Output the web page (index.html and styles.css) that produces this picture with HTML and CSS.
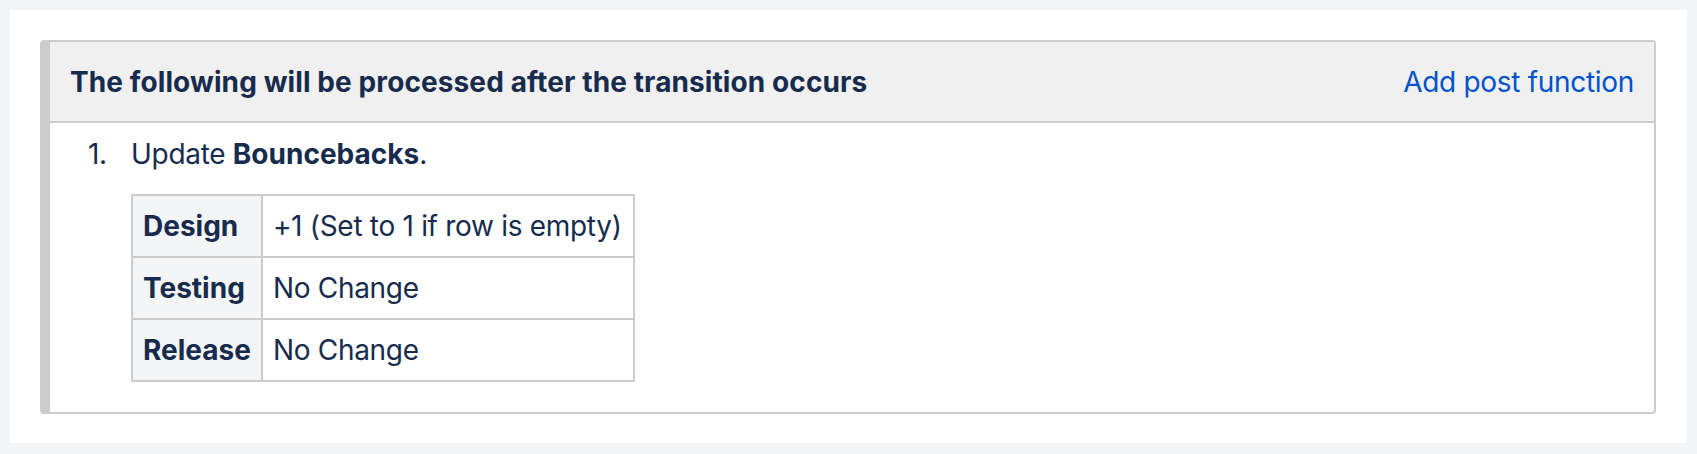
FILE: index.html
```html
<!DOCTYPE html>
<html lang="en">
<head>
    <meta charset="UTF-8">
    <title>Post Functions</title>
    <link rel="stylesheet" href="styles.css">
</head>
<body>
    <div class="page-panel">
        <!-- Post functions box -->
        <div class="rule-box">
            <div class="rule-header">
                <h3>The following will be processed after the transition occurs</h3>
                <a class="add-link" href="#">Add post function</a>
            </div>
            <ol class="rule-list">
                <li>
                    <div class="rule-body">
                        <p>Update <b>Bouncebacks</b>.</p>
                        <table class="field-table">
                            <tr>
                                <th>Design</th>
                                <td>+1 (Set to 1 if row is empty)</td>
                            </tr>
                            <tr>
                                <th>Testing</th>
                                <td>No Change</td>
                            </tr>
                            <tr>
                                <th>Release</th>
                                <td>No Change</td>
                            </tr>
                        </table>
                    </div>
                </li>
            </ol>
        </div>
    </div>
</body>
</html>
```

FILE: styles.css
```css
body {
    margin: 0;
    padding: 10px;
    background-color: #f4f5f7;
    font-family: 'Inter', 'Liberation Sans', sans-serif;
    font-size: 28px;
    line-height: 40px;
    letter-spacing: -0.3px;
    color: #172b4d;
}
b, th {
    letter-spacing: 0;
}
.page-panel {
    background-color: #fff;
    padding: 30px 31px 29px 30px;
}
.rule-box {
    border: 2px solid #ccc;
    border-left-width: 10px;
    border-radius: 4px;
}
.rule-header {
    display: flex;
    justify-content: space-between;
    align-items: center;
    height: 79px;
    padding: 0 20px;
    background-color: #f0f0f0;
    border-bottom: 2px solid #ccc;
}
.rule-header h3 {
    margin: 0;
    font-size: 28px;
    font-weight: 700;
    letter-spacing: 0.1px;
}
.add-link {
    color: #0052cc;
    text-decoration: none;
}
.rule-list {
    list-style: none;
    margin: 0;
    padding: 11px 20px 30px 38px;
    counter-reset: step;
}
.rule-list li {
    display: flex;
    counter-increment: step;
}
.rule-list li::before {
    content: counter(step) ".";
    width: 43px;
    flex-shrink: 0;
}
.rule-body p {
    margin: 0 0 20px;
}
.field-table {
    border-collapse: collapse;
}
.field-table th,
.field-table td {
    border: 2px solid #ccc;
    padding: 10px 10px 10px 10px;
    text-align: left;
}
.field-table td {
    padding-right: 11px;
}
.field-table th {
    background-color: #f4f5f7;
    font-weight: 700;
}
```
